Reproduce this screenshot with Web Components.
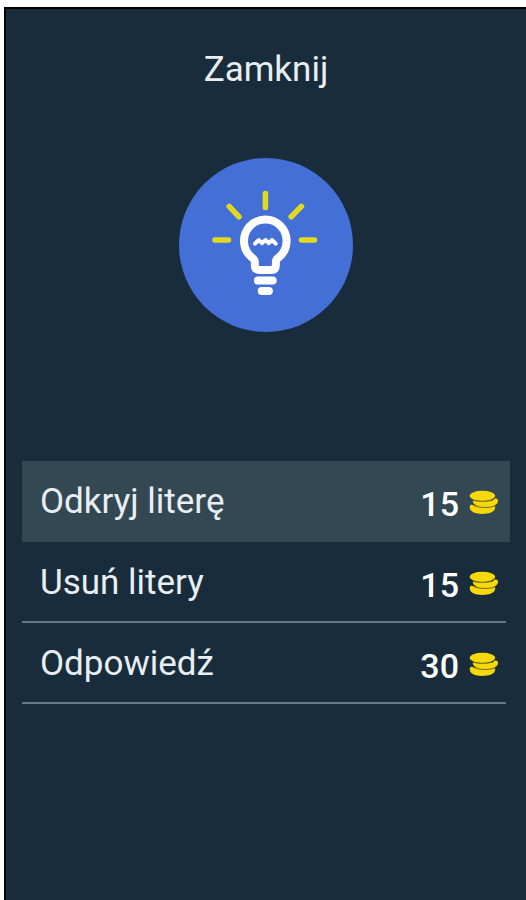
<!DOCTYPE html>
<html lang="pl">
    <head>
        <meta charset="UTF-8" />
        <meta name="viewport" content="width=device-width, initial-scale=1" />
        <title>Podpowiedzi</title>
        <style>
            body {
                margin: 0;
                background-color: #fff;
            }
        </style>
    </head>

    <body>
        <hint-panel>
            <span slot="close">Zamknij</span>
            <hint-option price="15" selected>Odkryj literę</hint-option>
            <hint-option price="15">Usuń litery</hint-option>
            <hint-option price="30">Odpowiedź</hint-option>
        </hint-panel>

        <script>
            class CoinStack extends HTMLElement {
                connectedCallback() {
                    this.attachShadow({ mode: "open" }).innerHTML = `
          <style>
            :host {
              display: block;
              width: 30px;
              height: 25px;
            }
            svg {
              display: block;
            }
          </style>
          <svg width="30" height="25" viewBox="0 0 30 25" fill="#f8d808" aria-hidden="true">
            <path d="M.7 17C.9 14.6 2.6 14.4 5 15.4H25.6C26.4 16.2 26.4 17.6 25.8 19C24.6 22.4 19.6 23.9 13.4 23.9C6 23.9 .5 21.6 .7 17Z" />
            <path d="M3.8 10.8H23L25.8 8.6C28 8 29.3 9.4 29 11.4C28.4 15 23 17 16.4 17C9.4 17 3.8 14.8 3.8 10.8Z" />
            <ellipse cx="13.4" cy="5.8" rx="12.7" ry="5.1" />
            <path d="M3.4 10C8.6 11.9 18.6 11.9 23.4 10Q25.2 9.2 26 8M4.2 15.1C9 18 20 18.2 26.4 15.9" fill="none" stroke="#6f6a1c" stroke-width="1" />
          </svg>`;
                }
            }
            window.customElements.define("coin-stack", CoinStack);

            class HintBulb extends HTMLElement {
                connectedCallback() {
                    this.attachShadow({ mode: "open" }).innerHTML = `
          <style>
            :host {
              display: block;
              width: 174px;
              height: 174px;
              border-radius: 50%;
              background-color: #446fd6;
            }
            svg {
              display: block;
            }
          </style>
          <svg width="174" height="174" viewBox="0 0 174 174" fill="none" stroke-linecap="round" stroke-linejoin="round" aria-hidden="true">
            <path stroke="#e2d91f" stroke-width="5.6" d="M86.4 35.5V49.5M36 82H49.5M122.5 82H135.5M50.2 48.4L60 58.8M122.4 48.4L112.2 58.8" />
            <g stroke="#fff">
              <path stroke-width="8" d="M75.8 107V103.5C75.8 101.5 74.5 100.6 72.7 99.3A21.3 21.3 0 1 1 99.9 99.3C98.1 100.6 96.9 101.5 96.9 103.5V107Q96.9 112 92 112H80.7Q75.8 112 75.8 107Z" />
              <path stroke-width="8" d="M78.9 122.5H93.7M82.7 133H89.9" />
              <path stroke-width="4" d="M76 85.6L79.9 82L82.9 85.2L86.5 82L89.9 85.2L93.1 82L96.7 85.6" />
            </g>
          </svg>`;
                }
            }
            window.customElements.define("hint-bulb", HintBulb);

            class HintOption extends HTMLElement {
                get price() {
                    return this.getAttribute("price");
                }

                connectedCallback() {
                    this.attachShadow({ mode: "open" }).innerHTML = `
          <style>
            :host {
              display: block;
              margin-right: 4px;
              border-bottom: 2px solid #607a88;
            }
            :host([selected]) {
              margin-right: 0;
              padding-right: 4px;
              border-bottom-color: #344854;
              background-color: #344854;
            }
            button {
              display: flex;
              align-items: center;
              justify-content: space-between;
              box-sizing: border-box;
              width: 100%;
              padding: 21px 7px 18px 18px;
              border: 0;
              background: none;
              font: inherit;
              line-height: 40px;
              color: inherit;
              text-align: left;
              cursor: pointer;
            }
            .price {
              display: flex;
              align-items: center;
              gap: 10px;
              color: #fff;
            }
            .amount {
              padding-top: 4px;
              font-size: 34px;
              line-height: 36px;
              font-weight: 500;
            }
          </style>
          <button type="button">
            <slot></slot>
            <span class="price">
              <span class="amount">${this.price}</span>
              <coin-stack></coin-stack>
            </span>
          </button>`;
                }
            }
            window.customElements.define("hint-option", HintOption);

            class HintPanel extends HTMLElement {
                connectedCallback() {
                    this.attachShadow({ mode: "open" }).innerHTML = `
          <style>
            :host {
              display: flex;
              flex-direction: column;
              box-sizing: border-box;
              min-height: calc(100vh - 7px);
              margin: 7px 0 0 4px;
              padding: 41px 16px;
              border: solid #000;
              border-width: 2px 0 0 2px;
              background-color: #182c3b;
              color: #e9eef2;
              font-family: Roboto, sans-serif;
              font-size: 35px;
              line-height: 40px;
            }
            .close {
              align-self: center;
              padding: 0;
              border: 0;
              background: none;
              font: inherit;
              color: inherit;
              cursor: pointer;
            }
            hint-bulb {
              align-self: center;
              margin: 68px 0 129px;
            }
          </style>
          <button class="close" type="button"><slot name="close"></slot></button>
          <hint-bulb></hint-bulb>
          <div><slot></slot></div>`;

                    this.shadowRoot
                        .querySelector(".close")
                        .addEventListener("click", () => {
                            this.dispatchEvent(new CustomEvent("close"));
                        });
                }
            }
            window.customElements.define("hint-panel", HintPanel);
        </script>
    </body>
</html>
